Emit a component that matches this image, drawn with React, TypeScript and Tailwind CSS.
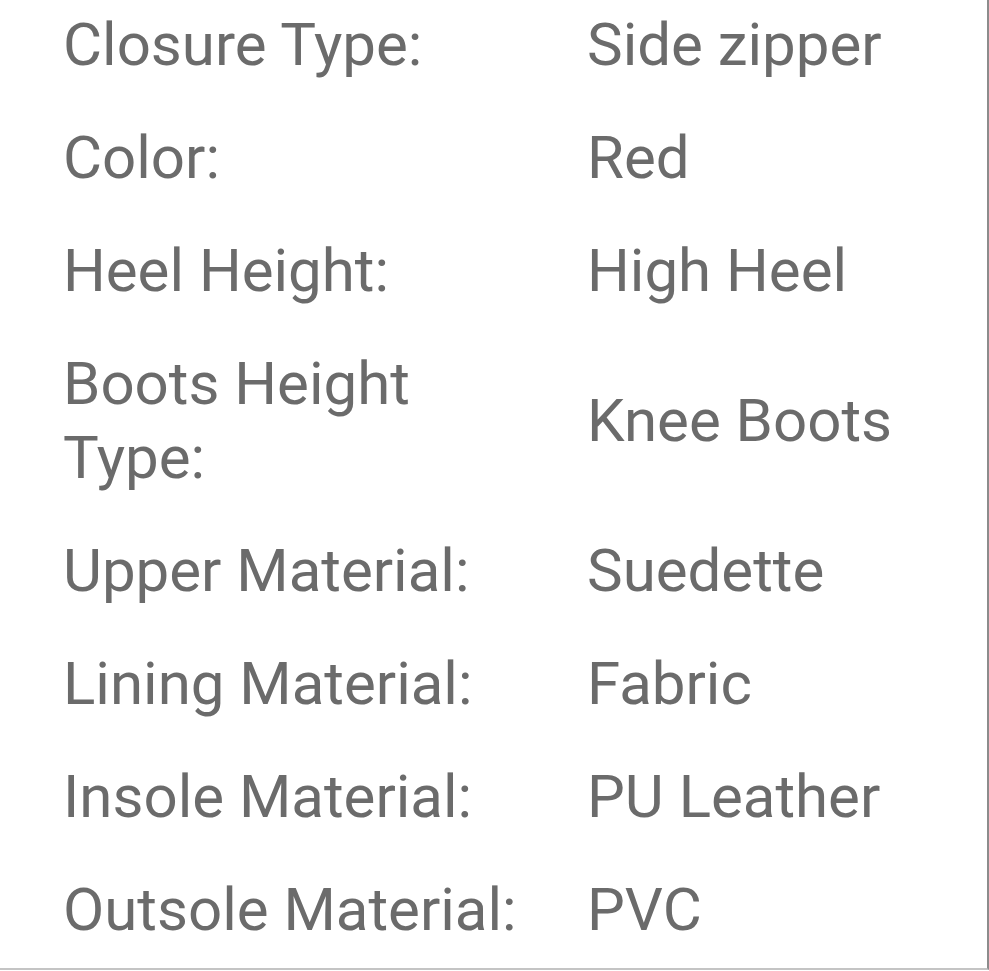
import React from "react";

const rows: [string, string][] = [
  ["Closure Type:", "Side zipper"],
  ["Color:", "Red"],
  ["Heel Height:", "High Heel"],
  ["Boots Height Type:", "Knee Boots"],
  ["Upper Material:", "Suedette"],
  ["Lining Material:", "Fabric"],
  ["Insole Material:", "PU Leather"],
  ["Outsole Material:", "PVC"],
];

export default function App() {
  return (
    <div className="w-[989px] h-[971px] overflow-hidden bg-white">
      <div className="w-[989px] h-[970px] border-r-2 border-b-2 border-r-[#8c8c8c] border-b-[#c4c4c4] overflow-hidden">
        <div
          className="-mt-[12px] text-[#6b6b6b] text-[60px] leading-[74px]"
          style={{ fontFamily: "Roboto, 'Noto Sans', sans-serif" }}
        >
          {rows.map(([k, v]) => (
            <div key={k} className="flex items-center py-[19.5px]">
              <div className="w-[587px] shrink-0 pl-[63px] pr-[60px]">{k}</div>
              <div>{v}</div>
            </div>
          ))}
        </div>
      </div>
    </div>
  );
}
